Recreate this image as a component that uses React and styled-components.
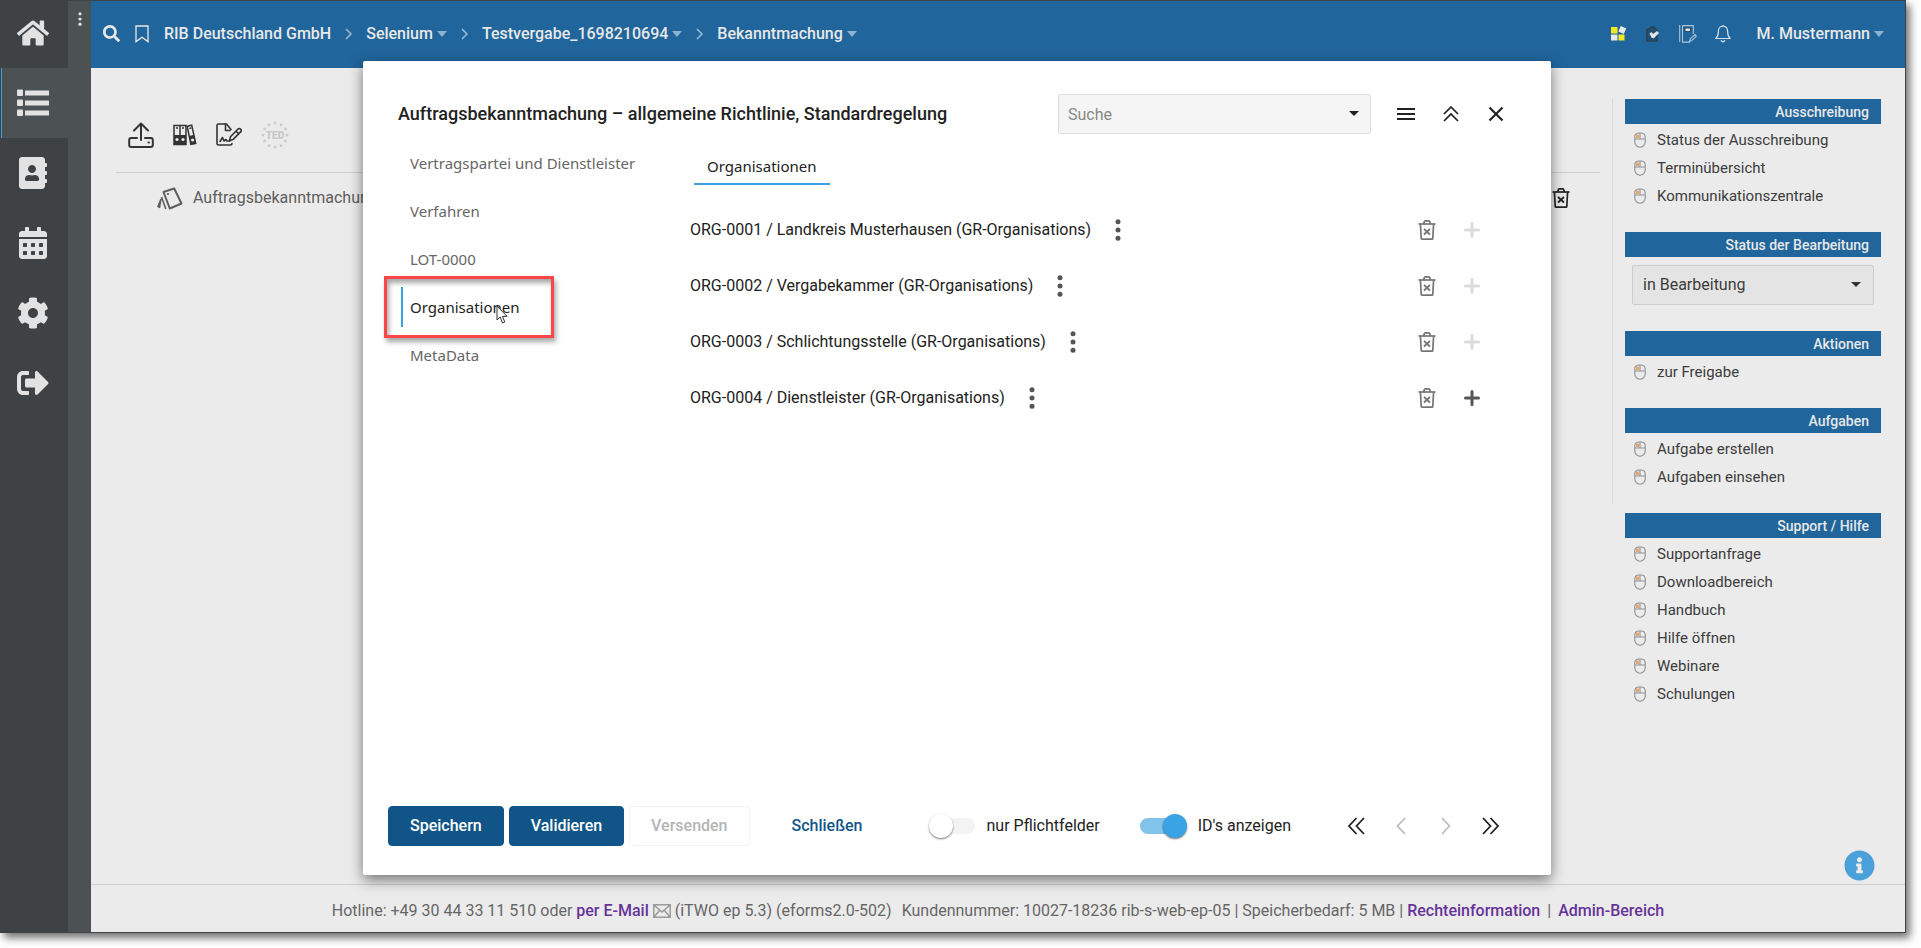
import React, { useState } from "react";
import styled, { createGlobalStyle } from "styled-components";
import {
  FaHome,
  FaAddressBook,
  FaCalendarAlt,
  FaCog,
  FaSignOutAlt,
  FaSearch,
  FaInfoCircle,
} from "react-icons/fa";

const sections = [
  {
    title: "Ausschreibung",
    links: ["Status der Ausschreibung", "Terminübersicht", "Kommunikationszentrale"],
  },
  { title: "Status der Bearbeitung", status: true },
  { title: "Aktionen", links: ["zur Freigabe"] },
  { title: "Aufgaben", links: ["Aufgabe erstellen", "Aufgaben einsehen"] },
  {
    title: "Support / Hilfe",
    links: [
      "Supportanfrage",
      "Downloadbereich",
      "Handbuch",
      "Hilfe öffnen",
      "Webinare",
      "Schulungen",
    ],
  },
];

const crumbs = ["Selenium", "Testvergabe_1698210694", "Bekanntmachung"];

const formParts = [
  "Vertragspartei und Dienstleister",
  "Verfahren",
  "LOT-0000",
  "Organisationen",
  "MetaData",
];

const organisations = [
  "ORG-0001 / Landkreis Musterhausen (GR-Organisations)",
  "ORG-0002 / Vergabekammer (GR-Organisations)",
  "ORG-0003 / Schlichtungsstelle (GR-Organisations)",
  "ORG-0004 / Dienstleister (GR-Organisations)",
];

/* ---------- icons ---------- */

const ListIcon = () => (
  <svg width="32" height="28" viewBox="0 0 32 28" fill="currentColor">
    {[0, 10, 20].map((y) => (
      <g key={y}>
        <rect x="0" y={y + 0.5} width="6" height="6.5" rx="1" />
        <rect x="8" y={y + 1.5} width="24" height="5" rx="0.5" />
      </g>
    ))}
  </svg>
);

const BookmarkIcon = () => (
  <svg width="14" height="18" viewBox="0 0 14 18" fill="none" stroke="currentColor" strokeWidth="1.3">
    <path d="M1 1h12v15.6l-6-4.4-6 4.4z" />
  </svg>
);

const CrumbChevron = () => (
  <svg width="7" height="12" viewBox="0 0 7 12" fill="none" stroke="#9dbdd6" strokeWidth="1.5">
    <path d="M1 1l5 5-5 5" />
  </svg>
);

const UploadIcon = () => (
  <svg width="26" height="26" viewBox="0 0 26 26" fill="none" stroke="currentColor" strokeWidth="2" strokeLinecap="round" strokeLinejoin="round">
    <path d="M13 18V1.5M6 8.5l7-7 7 7" />
    <path d="M9 16H3.2A2 2 0 0 0 1.2 18v5a2 2 0 0 0 2 2h19.6a2 2 0 0 0 2-2v-5a2 2 0 0 0-2-2H17" />
    <path d="M20.5 20.5h.4" />
  </svg>
);

const BinderIcon = () => (
  <svg width="24" height="22" viewBox="0 0 24 22">
    <g fill="none" stroke="currentColor" strokeWidth="1.5">
      <path d="M1 1.5h6v19H1zM7 1.5h6v19H7z" />
      <path d="M14.2 2.2l4.5-1 4 18.2-4.8 1z" />
    </g>
    <path d="M1 11h12v9.500H1zM16 12l5-1.200 2 8.800-5 1z" fill="currentColor" />
    <path d="M3 4h2M9 4h2M16.5 4.5l1.8-.4" stroke="currentColor" strokeWidth="1.5" />
    <circle cx="4" cy="15.5" r="1.6" fill="#ebebeb" />
    <circle cx="10" cy="15.5" r="1.6" fill="#ebebeb" />
    <circle cx="19.6" cy="16" r="1.6" fill="#ebebeb" />
  </svg>
);

const SignIcon = () => (
  <svg width="26" height="23" viewBox="0 0 26 23" fill="none" stroke="currentColor" strokeWidth="1.6" strokeLinejoin="round" strokeLinecap="round">
    <path d="M15 6.500L10.500 1H2.500A1.500 1.500 0 0 0 1 2.500v18A1.500 1.500 0 0 0 2.500 22h12a1.500 1.500 0 0 0 1.500-1.500" />
    <path d="M9.5 1v6.500H14" />
    <path d="M4 18.500l2.500-4 1.500 3.500 2-1.500 1 1.500h3" />
    <path d="M14.500 13.800l7.300-7.600a1.900 1.900 0 0 1 2.800 2.700l-7.400 7.500-3.600 1.100zM20 8.200l2.600 2.600" />
  </svg>
);

const TedIcon = () => (
  <svg width="28" height="28" viewBox="0 0 28 28" fill="currentColor">
    {Array.from({ length: 12 }, (_, i) => (
      <path
        key={i}
        transform={`rotate(${i * 30} 14 14) translate(14 2) rotate(${-i * 30})`}
        d="M0-2l.6 1.300 1.400.1-1.100 1 .4 1.500L0 1.100l-1.300.8.4-1.500-1.100-1 1.400-.1z"
      />
    ))}
    <text x="14" y="17.500" textAnchor="middle" fontSize="10" fontWeight="900">
      TED
    </text>
  </svg>
);

const CardsIcon = () => (
  <svg width="26" height="23" viewBox="0 0 26 23" fill="none" stroke="currentColor" strokeWidth="2" strokeLinejoin="round">
    <path d="M6.500 5L17.200 1.500 24.500 16.500 12.800 21.500z" />
    <path d="M4.500 10l4.300 12M3.800 12.500L1 19.500l1.500.8z" strokeWidth="1.6" />
    <path d="M10.800 7l.4-.1" strokeLinecap="round" />
  </svg>
);

const TrashIcon = () => (
  <svg width="18" height="20" viewBox="0 0 18 20" fill="none" stroke="currentColor" strokeWidth="1.7" strokeLinejoin="round">
    <path d="M.5 4h17" />
    <path d="M2.400 4l.8 14.200a1 1 0 0 0 1 1h9.600a1 1 0 0 0 1-1L15.600 4" />
    <path d="M5.500 4l1-2.600a1 1 0 0 1 .8-.5h3.400a1 1 0 0 1 .8.5l1 2.600" />
    <path d="M6 9l6 5.500M12 9l-6 5.500" strokeWidth="1.800" />
  </svg>
);

const PlusIcon = () => (
  <svg width="16" height="16" viewBox="0 0 16 16" stroke="currentColor" strokeWidth="3" strokeLinecap="round">
    <path d="M8 1.500v13M1.500 8h13" />
  </svg>
);

const KebabIcon = ({ size = 22, r = 2.5 }) => (
  <svg width="6" height={size} viewBox={`0 0 6 ${size}`} fill="currentColor">
    <circle cx="3" cy={r + 0.2} r={r} />
    <circle cx="3" cy={size / 2} r={r} />
    <circle cx="3" cy={size - r - 0.2} r={r} />
  </svg>
);

const MouseIcon = () => (
  <svg width="12" height="16" viewBox="0 0 12 16" fill="none" stroke="#8f8f8f" strokeWidth="1.1">
    <path d="M2 2.500h3v3.500H2z" fill="#eda566" stroke="none" />
    <path d="M.8 5A4 4 0 0 1 4.500 1h3A4 4 0 0 1 11.200 5v5a5.200 5.200 0 0 1-10.400 0zM.8 7h10.400M6 1v6" />
  </svg>
);

const MailIcon = () => (
  <svg width="18" height="14" viewBox="0 0 18 14" fill="none" stroke="#9a9a9a" strokeWidth="1.5">
    <path d="M.8.8h16.400v12.400H.8zM1 1l8 7 8-7M1 13l5.500-6.500M17 13l-5.500-6.500" />
  </svg>
);

const MenuIcon = () => (
  <svg width="18" height="14" viewBox="0 0 18 14" stroke="currentColor" strokeWidth="2">
    <path d="M0 2h18M0 7h18M0 12h18" />
  </svg>
);

const CollapseIcon = () => (
  <svg width="16" height="16" viewBox="0 0 16 16" fill="none" stroke="currentColor" strokeWidth="1.7">
    <path d="M1 8l7-7 7 7M1 15l7-7 7 7" />
  </svg>
);

const CloseIcon = () => (
  <svg width="16" height="16" viewBox="0 0 16 16" stroke="currentColor" strokeWidth="2.2">
    <path d="M1.500 1.500l13 13M14.500 1.500l-13 13" />
  </svg>
);

const PagerIcon = ({ d, width }) => (
  <svg width={width} height="18" viewBox={`0 0 ${width} 18`} fill="none" stroke="currentColor" strokeWidth="1.8">
    <path d={d} />
  </svg>
);

const TilesIcon = () => (
  <svg width="16" height="15" viewBox="0 0 16 15">
    <rect x="0" y="1" width="6.500" height="6.500" fill="#f2ea1f" />
    <rect x="0" y="8.500" width="6.500" height="6" fill="#e8e8e8" />
    <rect x="7.500" y="8.500" width="6" height="6" fill="#f2ea1f" />
    <rect x="8.500" y="1" width="6" height="6" fill="#e8e8e8" transform="rotate(25 11.500 3.500)" />
  </svg>
);

const ClipboardIcon = () => (
  <svg width="14" height="16" viewBox="0 0 14 16">
    <path d="M1 3.500L4 2.500l1-1.500h3l1 1.500 2 1V15H1z" fill="#20506f" stroke="#2b4254" strokeWidth="1.600" strokeLinejoin="round" />
    <path d="M3.500 7.500l2-1.500 1.500 2 4-3 2 2-5.500 5.500-2-1z" fill="#dfe5ea" />
  </svg>
);

const NotebookIcon = () => (
  <svg width="18" height="18" viewBox="0 0 18 18" fill="none" stroke="#aec5d8" strokeWidth="1.1">
    <path d="M.7 0v17M3.500.6h10.800V9M3.500.6v16.500h7.500" />
    <path d="M6 3h5.500v3.500H6z" stroke="#2c4a63" fill="#dfe5ea" />
    <path d="M10.500 16.500l1-3 4.500-4 1.300 1.700-4.300 4.200z" />
  </svg>
);

const BellIcon = () => (
  <svg width="16" height="18" viewBox="0 0 16 18" fill="none" stroke="#d4dfe8" strokeWidth="1.2" strokeLinejoin="round">
    <path d="M8 1.200c-3 0-4.600 2.200-4.600 5 0 4.300-1.200 6-2.600 7.300h14.400c-1.400-1.300-2.600-3-2.600-7.300 0-2.800-1.600-5-4.600-5zM8 0v1.200M6.200 15.200c.3 2.200 3.300 2.200 3.600 0" />
  </svg>
);

const CursorIcon = () => (
  <svg width="12" height="20" viewBox="0 0 12 20" fill="#fff" stroke="#333" strokeWidth="1">
    <path d="M1 1v14l3.200-3 2.300 6 2.300-1-2.400-5.600H11z" />
  </svg>
);

const App = () => {
  const [activePart, setActivePart] = useState("Organisationen");
  const [onlyRequired, setOnlyRequired] = useState(false);
  const [showIds, setShowIds] = useState(true);

  return (
    <>
      <GlobalStyle />
      <Frame>
        <MainNav>
          <NavButton aria-label="Startseite"><FaHome /></NavButton>
          <NavButton aria-label="Liste" $active><ListIcon /></NavButton>
          <NavButton aria-label="Adressbuch"><FaAddressBook /></NavButton>
          <NavButton aria-label="Kalender"><FaCalendarAlt /></NavButton>
          <NavButton aria-label="Einstellungen"><FaCog /></NavButton>
          <NavButton aria-label="Abmelden"><FaSignOutAlt /></NavButton>
        </MainNav>
        <Strip>
          <IconButton aria-label="Navigation öffnen">
            <KebabIcon size={14} r={1.6} />
          </IconButton>
        </Strip>

        <Page>
          <TopBar>
            <TopButton aria-label="Suchen"><FaSearch size={17} /></TopButton>
            <TopButton aria-label="Lesezeichen"><BookmarkIcon /></TopButton>
            <Breadcrumb>
              <Crumb href="#">RIB Deutschland GmbH</Crumb>
              {crumbs.map((crumb) => (
                <React.Fragment key={crumb}>
                  <CrumbChevron />
                  <Crumb href="#" $caret>{crumb}</Crumb>
                </React.Fragment>
              ))}
            </Breadcrumb>
            <TopIcons>
              <TopButton aria-label="Kacheln"><TilesIcon /></TopButton>
              <TopButton aria-label="Aufgaben"><ClipboardIcon /></TopButton>
              <TopButton aria-label="Notizen"><NotebookIcon /></TopButton>
              <TopButton aria-label="Benachrichtigungen"><BellIcon /></TopButton>
            </TopIcons>
            <Crumb href="#" $caret>M. Mustermann</Crumb>
          </TopBar>

          <Content>
            <Workspace>
              <Toolbar>
                <IconButton aria-label="Hochladen"><UploadIcon /></IconButton>
                <IconButton aria-label="Ordner"><BinderIcon /></IconButton>
                <IconButton aria-label="Signieren"><SignIcon /></IconButton>
                <IconButton aria-label="TED" $color="#c8c8c8"><TedIcon /></IconButton>
              </Toolbar>
              <DocumentRow>
                <CardsIcon />
                <DocumentName>Auftragsbekanntmachung</DocumentName>
                <IconButton aria-label="Dokument löschen" $color="#222"><TrashIcon /></IconButton>
              </DocumentRow>
            </Workspace>

            <Sidebar>
              {sections.map((section) => (
                <Section key={section.title}>
                  <SectionTitle>{section.title}</SectionTitle>
                  {section.status ? (
                    <StatusBox>
                      <StatusSelect aria-label="Status der Bearbeitung">
                        <option>in Bearbeitung</option>
                      </StatusSelect>
                    </StatusBox>
                  ) : (
                    <LinkList>
                      {section.links.map((link) => (
                        <li key={link}>
                          <SideLink href="#"><MouseIcon />{link}</SideLink>
                        </li>
                      ))}
                    </LinkList>
                  )}
                </Section>
              ))}
            </Sidebar>
          </Content>

          <Footer>
            <span>Hotline: +49 30 44 33 11 510 oder <a href="#">per E-Mail</a></span>
            <MailIcon />
            <span>(iTWO ep 5.3) (eforms2.0-502)</span>
            <CustomerInfo>
              Kundennummer: 10027-18236 rib-s-web-ep-05 | Speicherbedarf: 5 MB |{" "}
              <a href="#">Rechteinformation</a>
            </CustomerInfo>
            <Divider>|</Divider>
            <a href="#">Admin-Bereich</a>
          </Footer>
        </Page>

        <InfoButton aria-label="Info"><FaInfoCircle size={31} /></InfoButton>

        <Overlay>
          <Dialog role="dialog" aria-labelledby="dialog-title">
            <DialogHeader>
              <DialogTitle id="dialog-title">
                Auftragsbekanntmachung – allgemeine Richtlinie, Standardregelung
              </DialogTitle>
              <SearchBox>
                <SearchInput placeholder="Suche" aria-label="Suche" />
              </SearchBox>
              <HeaderButton aria-label="Menü"><MenuIcon /></HeaderButton>
              <HeaderButton aria-label="Einklappen"><CollapseIcon /></HeaderButton>
              <HeaderButton aria-label="Dialog schließen"><CloseIcon /></HeaderButton>
            </DialogHeader>

            <DialogBody>
              <PartNav>
                {formParts.map((part) => (
                  <PartButton
                    key={part}
                    $active={part === activePart}
                    onClick={() => setActivePart(part)}
                  >
                    {part}
                    {part === "Organisationen" && (
                      <>
                        <Highlight />
                        <Pointer><CursorIcon /></Pointer>
                      </>
                    )}
                  </PartButton>
                ))}
              </PartNav>
              <PartContent>
                <Tab>Organisationen</Tab>
                <OrgList>
                  {organisations.map((org, i) => (
                    <OrgRow key={org}>
                      <OrgName>{org}</OrgName>
                      <IconButton aria-label="Optionen" $color="#555"><KebabIcon /></IconButton>
                      <RowActions>
                        <IconButton aria-label="Löschen" $color="#757575"><TrashIcon /></IconButton>
                        <IconButton
                          aria-label="Hinzufügen"
                          disabled={i < organisations.length - 1}
                          $color={i < organisations.length - 1 ? "#dcdcdc" : "#555"}
                        >
                          <PlusIcon />
                        </IconButton>
                      </RowActions>
                    </OrgRow>
                  ))}
                </OrgList>
              </PartContent>
            </DialogBody>

            <DialogFooter>
              <ButtonGroup>
                <Button $primary>Speichern</Button>
                <Button $primary>Validieren</Button>
                <Button disabled>Versenden</Button>
              </ButtonGroup>
              <CloseButton>Schließen</CloseButton>
              <Toggles>
                <ToggleLabel>
                  <Toggle
                    type="checkbox"
                    checked={onlyRequired}
                    onChange={(e) => setOnlyRequired(e.target.checked)}
                  />
                  nur Pflichtfelder
                </ToggleLabel>
                <ToggleLabel>
                  <Toggle
                    type="checkbox"
                    checked={showIds}
                    onChange={(e) => setShowIds(e.target.checked)}
                  />
                  ID's anzeigen
                </ToggleLabel>
              </Toggles>
              <Pager>
                <HeaderButton aria-label="Erste Seite">
                  <PagerIcon width={18} d="M9.500 1L2 9l7.500 8M17 1L9.500 9l7.500 8" />
                </HeaderButton>
                <HeaderButton aria-label="Vorherige Seite" $color="#bdbdbd" disabled>
                  <PagerIcon width={10} d="M9 1L1.500 9 9 17" />
                </HeaderButton>
                <HeaderButton aria-label="Nächste Seite" $color="#bdbdbd" disabled>
                  <PagerIcon width={10} d="M1 1l7.500 8L1 17" />
                </HeaderButton>
                <HeaderButton aria-label="Letzte Seite">
                  <PagerIcon width={18} d="M1 1l7.500 8L1 17M8.500 1L16 9l-7.500 8" />
                </HeaderButton>
              </Pager>
            </DialogFooter>
          </Dialog>
        </Overlay>
      </Frame>
    </>
  );
};

export default App;

const GlobalStyle = createGlobalStyle`
  * {
    box-sizing: border-box;
  }

  body {
    margin: 0;
    background: #fff;
    color: #3c3c3c;
    font-family: Roboto, "Liberation Sans", sans-serif;
    font-size: 16px;
    line-height: 20px;
  }

  button, input, select {
    font: inherit;
  }

  a {
    text-decoration: none;
  }

  svg {
    display: block;
    flex: none;
  }
`;

const Frame = styled.div`
  position: relative;
  display: flex;
  min-height: calc(100vh - 15px);
  margin: 0 15px 15px 0;
  border: 1px solid #3f4245;
  box-shadow: 4px 5px 8px rgba(0, 0, 0, 0.55);
`;

const MainNav = styled.nav`
  display: flex;
  flex-direction: column;
  width: 67px;
  background: #3e4244;
`;

const NavButton = styled.button`
  display: flex;
  align-items: center;
  justify-content: center;
  height: 70px;
  padding: 0 4px 0 0;
  border: 0;
  border-left: 1px solid ${({ $active }) => ($active ? "#3ba3e4" : "transparent")};
  background: ${({ $active }) => ($active ? "#4c5154" : "none")};
  color: #e2e2e2;
  font-size: 32px;

  &:first-child {
    height: 67px;
    padding-bottom: 3px;
  }
`;

const Strip = styled.div`
  display: flex;
  justify-content: center;
  align-items: flex-start;
  width: 23px;
  padding-top: 11px;
  background: #4c5154;
  color: #e2e2e2;
`;

const IconButton = styled.button`
  display: flex;
  align-items: center;
  justify-content: center;
  padding: 0;
  border: 0;
  background: none;
  color: ${({ $color }) => $color || "inherit"};
`;

const Page = styled.div`
  display: flex;
  flex: 1;
  flex-direction: column;
  min-width: 0;
  background: #ebebeb;
`;

const TopBar = styled.header`
  display: flex;
  align-items: center;
  height: 67px;
  padding: 0 21px 2px 12px;
  background: #20659c;
  color: #e8e8e8;
`;

const TopButton = styled(IconButton)`
  min-width: 16px;
  margin-right: 14px;
`;

const Breadcrumb = styled.nav`
  display: flex;
  flex: 1;
  align-items: center;
  gap: 14px;
`;

const Crumb = styled.a`
  display: flex;
  align-items: center;
  gap: 4px;
  color: #e8e8e8;
  font-weight: 500;

  &::after {
    content: "";
    display: ${({ $caret }) => ($caret ? "block" : "none")};
    border: 5px solid transparent;
    border-top: 6px solid #8fb2ce;
    border-bottom: 0;
  }
`;

const TopIcons = styled.div`
  display: flex;
  gap: 4px;
  margin-right: 12px;
`;

const Content = styled.div`
  display: flex;
  flex: 1;
  align-items: flex-start;
  padding: 31px 24px 0 25px;
`;

const Workspace = styled.main`
  flex: 1;
  min-height: 405px;
  padding-right: 12px;
  border-right: 1px solid #d8d8d8;
`;

const Toolbar = styled.div`
  display: flex;
  align-items: center;
  gap: 19px;
  height: 74px;
  padding: 0 0 2px 12px;
  border-bottom: 1px solid #cfcfcf;
  color: #333;
`;

const DocumentRow = styled.div`
  display: flex;
  align-items: center;
  gap: 10px;
  height: 50px;
  padding: 0 30px 0 41px;
  color: #5e5e5e;
`;

const DocumentName = styled.span`
  flex: 1;
`;

const Sidebar = styled.aside`
  width: 256px;
  margin-left: 12px;
`;

const Section = styled.section`
  margin-bottom: 22px;
`;

const SectionTitle = styled.h2`
  margin: 0;
  padding: 3px 12px 2px;
  background: #20659c;
  color: #e8e8e8;
  font-size: 14px;
  font-weight: 500;
  text-align: right;
`;

const LinkList = styled.ul`
  margin: 0;
  padding: 2px 0 0;
  list-style: none;
`;

const SideLink = styled.a`
  display: flex;
  align-items: center;
  gap: 11px;
  height: 28px;
  padding-left: 9px;
  color: #3c3c3c;
  font-size: 15px;
`;

const StatusBox = styled.div`
  position: relative;
  padding: 8px 7px 4px;

  &::after {
    content: "";
    position: absolute;
    top: 25px;
    right: 20px;
    border: 5px solid transparent;
    border-top-color: #333;
    border-bottom: 0;
    pointer-events: none;
  }
`;

const StatusSelect = styled.select`
  display: block;
  width: 100%;
  height: 40px;
  padding: 0 10px;
  border: 1px solid #cdcdcd;
  border-radius: 2px;
  background: #e4e4e4;
  color: #3c3c3c;
  appearance: none;
`;

const Footer = styled.footer`
  display: flex;
  align-items: center;
  justify-content: center;
  gap: 4px;
  height: 48px;
  padding-top: 4px;
  border-top: 1px solid #d0d0d0;
  color: #666;
  white-space: nowrap;

  a {
    color: #663399;
    font-weight: 500;
  }
`;

const CustomerInfo = styled.span`
  margin-left: 6px;
`;

const Divider = styled.span`
  margin: 0 3px;
`;

const InfoButton = styled(IconButton)`
  position: absolute;
  right: 30px;
  bottom: 51px;
  color: #4aa1d9;
`;

const Overlay = styled.div`
  position: absolute;
  inset: 0;
  display: flex;
  padding: 60px 354px 57px 362px;
  pointer-events: none;
`;

const Dialog = styled.div`
  display: flex;
  flex: 1;
  flex-direction: column;
  min-width: 0;
  border-radius: 2px;
  background: #fff;
  box-shadow: 0 5px 14px rgba(0, 0, 0, 0.5);
  color: #222;
  pointer-events: auto;
`;

const DialogHeader = styled.header`
  display: flex;
  align-items: center;
  padding: 33px 33px 0 35px;
`;

const DialogTitle = styled.h1`
  flex: 1;
  margin: 0;
  font-size: 18px;
  font-weight: 500;
`;

const SearchBox = styled.div`
  position: relative;
  width: 313px;
  margin-right: 12px;

  &::after {
    content: "";
    position: absolute;
    top: 17px;
    right: 12px;
    border: 5px solid transparent;
    border-top-color: #222;
    border-bottom: 0;
  }
`;

const SearchInput = styled.input`
  display: block;
  width: 100%;
  height: 40px;
  padding: 0 30px 0 9px;
  border: 1px solid #dedede;
  border-radius: 2px;
  background: #f5f5f5;

  &::placeholder {
    color: #888;
  }
`;

const HeaderButton = styled(IconButton)`
  width: 45px;
  height: 40px;
`;

const DialogBody = styled.div`
  display: flex;
  flex: 1;
  padding: 9px 33px 0 38px;
`;

const PartNav = styled.nav`
  display: flex;
  flex-direction: column;
  align-items: flex-start;
  gap: 8px;
  width: 293px;
`;

const PartButton = styled.button`
  position: relative;
  height: 40px;
  padding: 0 0 0 7px;
  border: 0;
  border-left: 2px solid ${({ $active }) => ($active ? "#3ba3e4" : "transparent")};
  background: none;
  color: ${({ $active }) => ($active ? "#222" : "#666")};
  font-family: "Noto Sans", "Open Sans", sans-serif;
  font-size: 15px;
  white-space: nowrap;
`;

const Highlight = styled.span`
  position: absolute;
  inset: -11px -34px -11px -19px;
  border: 3px solid #fb4548;
  box-shadow: 2px 4px 5px rgba(0, 0, 0, 0.35), inset 2px 4px 5px rgba(0, 0, 0, 0.35);
  pointer-events: none;
`;

const Pointer = styled.span`
  position: absolute;
  top: 18px;
  right: 12px;
  pointer-events: none;
`;

const PartContent = styled.div`
  flex: 1;
`;

const Tab = styled.button`
  height: 42px;
  padding: 5px 13px 0;
  border: 0;
  border-bottom: 2px solid #3ba3e4;
  background: none;
  color: #222;
  font-family: "Noto Sans", "Open Sans", sans-serif;
  font-size: 15px;
`;

const OrgList = styled.ul`
  margin: 17px 0 0;
  padding: 0;
  list-style: none;
`;

const OrgRow = styled.li`
  display: flex;
  align-items: center;
  height: 56px;
`;

const OrgName = styled.span`
  margin: 0 24px 0 -4px;
`;

const RowActions = styled.div`
  display: flex;
  align-items: center;
  gap: 28px;
  margin-left: auto;
  padding-right: 38px;
`;

const DialogFooter = styled.footer`
  display: flex;
  align-items: center;
  padding: 0 38px 29px 25px;
`;

const ButtonGroup = styled.div`
  display: flex;
  gap: 5px;
`;

const Button = styled.button`
  height: 40px;
  padding: 0 21px;
  border: 1px solid ${({ $primary }) => ($primary ? "#115588" : "#f3f3f3")};
  border-radius: 4px;
  background: ${({ $primary }) => ($primary ? "#115588" : "#fff")};
  color: ${({ $primary }) => ($primary ? "#fff" : "#b5b5b5")};
  font-weight: 500;
`;

const CloseButton = styled(Button)`
  margin-left: 20px;
  border-color: transparent;
  color: #115588;
`;

const Toggles = styled.div`
  display: flex;
  gap: 40px;
  margin-left: 44px;
`;

const ToggleLabel = styled.label`
  display: flex;
  align-items: center;
  gap: 12px;
`;

const Toggle = styled.input`
  position: relative;
  width: 46px;
  height: 16px;
  margin: 0;
  border-radius: 8px;
  background: ${({ checked }) => (checked ? "#82c4e9" : "#f3f3f3")};
  appearance: none;

  &::after {
    content: "";
    position: absolute;
    top: -4px;
    left: ${({ checked }) => (checked ? "23px" : "0")};
    width: 24px;
    height: 24px;
    border-radius: 50%;
    background: ${({ checked }) => (checked ? "#3aa3e5" : "#fff")};
    box-shadow: 0 1px 2px rgba(0, 0, 0, 0.55);
  }
`;

const Pager = styled.div`
  display: flex;
  margin-left: auto;
`;
